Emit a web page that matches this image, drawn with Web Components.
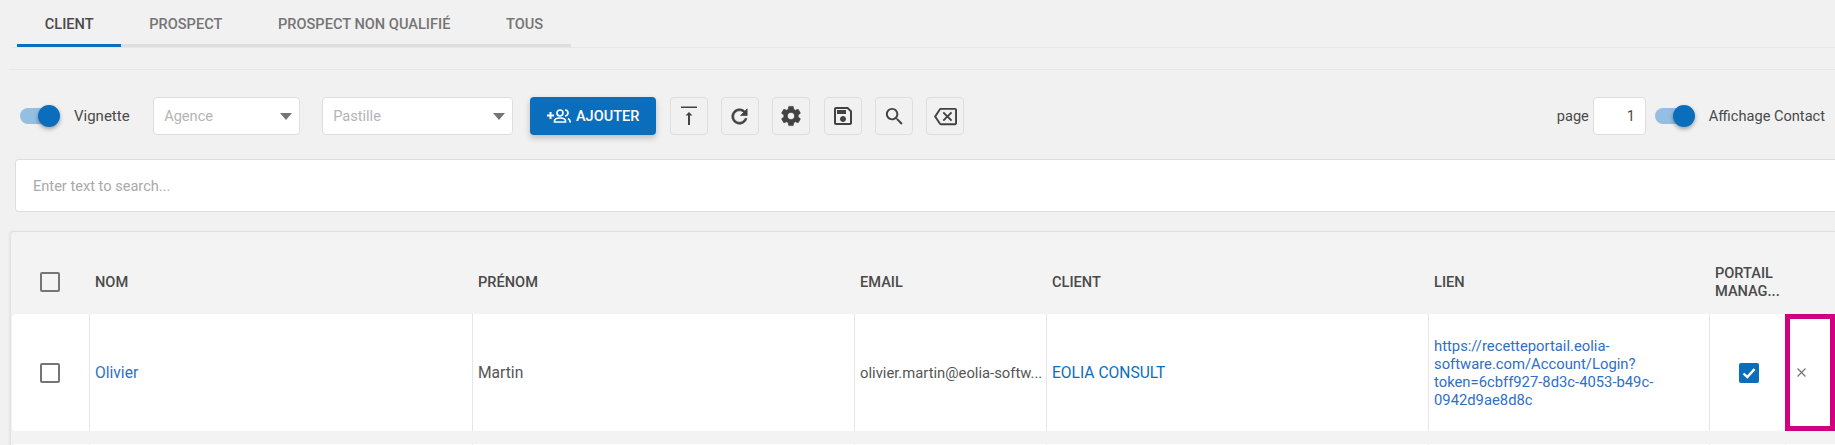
<!DOCTYPE html>
<html lang="fr">
<head>
<meta charset="utf-8">
<title>Contacts</title>
<style>
	html, body { margin: 0; height: 100%; overflow: hidden; }
	body { background: #f1f1f1; color: #4a4a4a; font: 14.6px Roboto, "Liberation Sans", sans-serif; }
</style>
</head>
<body>
<contact-page></contact-page>
<script>
const ICONS = {
	top: '<path d="M4 2.500h16v1.600H4zM12 8l-3.500 3.500h2.500V21h2v-9.500h2.500z"/>',
	refresh: '<path stroke="#424242" stroke-width=".7" d="M17.65 6.35C16.2 4.9 14.21 4 12 4c-4.42 0-7.99 3.58-7.99 8s3.57 8 7.99 8c3.73 0 6.84-2.55 7.73-6h-2.08c-.82 2.33-3.04 4-5.65 4-3.31 0-6-2.69-6-6s2.69-6 6-6c1.66 0 3.14.69 4.22 1.78L13 11h7V4l-2.35 2.35z"/>',
	settings: '<path stroke="#424242" stroke-width=".6" d="M19.14 12.94c.04-.3.06-.61.06-.94 0-.32-.02-.64-.07-.94l2.03-1.58c.18-.14.23-.41.12-.61l-1.92-3.32c-.12-.22-.37-.29-.59-.22l-2.39.96c-.5-.38-1.03-.7-1.62-.94l-.36-2.54c-.04-.24-.24-.41-.48-.41h-3.84c-.24 0-.43.17-.47.41l-.36 2.54c-.59.24-1.13.57-1.62.94l-2.39-.96c-.22-.08-.47 0-.59.22L2.74 8.87c-.12.21-.08.47.12.61l2.03 1.58c-.05.3-.09.63-.09.94s.02.64.07.94l-2.03 1.58c-.18.14-.23.41-.12.61l1.92 3.32c.12.22.37.29.59.22l2.39-.96c.5.38 1.03.7 1.62.94l.36 2.54c.05.24.24.41.48.41h3.84c.24 0 .44-.17.47-.41l.36-2.54c.59-.24 1.13-.56 1.62-.94l2.39.96c.22.08.47 0 .59-.22l1.92-3.32c.12-.22.07-.47-.12-.61l-2.01-1.58zM12 15.600c-1.98 0-3.6-1.62-3.6-3.6s1.62-3.6 3.6-3.6 3.6 1.62 3.6 3.6-1.62 3.6-3.6 3.6z"/>',
	save: '<path d="M17 3H5c-1.11 0-2 .9-2 2v14c0 1.1.89 2 2 2h14c1.1 0 2-.9 2-2V7l-4-4zm2 16H5V5h11.17L19 7.83V19zm-7-7c-1.66 0-3 1.34-3 3s1.34 3 3 3 3-1.34 3-3-1.34-3-3-3zM6 6h9v4H6z"/>',
	search: '<path d="M15.5 14h-.79l-.28-.27C15.41 12.59 16 11.11 16 9.5 16 5.91 13.09 3 9.5 3S3 5.91 3 9.5 5.91 16 9.5 16c1.61 0 3.09-.59 4.23-1.57l.27.28v.79l5 4.99L20.49 19l-4.99-5zm-6 0C7.01 14 5 11.99 5 9.5S7.01 5 9.5 5 14 7.01 14 9.5 11.99 14 9.5 14z"/>',
	clear: '<path d="M22 3H7c-.69 0-1.23.35-1.59.88L0 12l5.41 8.11c.36.53.9.89 1.59.89h15c1.1 0 2-.9 2-2V5c0-1.1-.9-2-2-2zm0 16H7.07L2.4 12l4.66-7H22v14zm-11.59-2L14 13.41 17.59 17 19 15.59 15.41 12 19 8.41 17.59 7 14 10.59 10.41 7 9 8.41 12.59 12 9 15.59z"/>'
};

class BaseElement extends HTMLElement {
	constructor() {
		super();
		this.attachShadow({ mode: "open" });
	}
	getStyles() {
		return "";
	}
	getMarkup() {
		return "<slot></slot>";
	}
	connectedCallback() {
		const template = document.createElement("template");
		template.innerHTML = `<style>${this.getStyles()}</style>${this.getMarkup()}`;
		this.shadowRoot.appendChild(template.content.cloneNode(true));
	}
}

class UiTab extends BaseElement {
	getStyles() {
		return `
			:host { display: block; height: 44px; line-height: 48px; padding: 0 27.800px; border-bottom: 3px solid #dedede;
				font-size: 14.600px; font-weight: 500; color: #757575; white-space: nowrap; }
			:host([active]) { border-bottom-color: #0a6ebd; color: #4a4a4a; }
		`;
	}
}

class UiTabs extends BaseElement {
	getStyles() {
		return `
			:host { display: block; height: 70px; box-sizing: border-box; padding-left: 12px; border-bottom: 1px solid #e7e7e7; margin-left: 9px; }
			.bar { display: flex; padding-left: 5px; border-bottom: 1px solid #e7e7e7; height: 47px; margin-left: -9px; }
		`;
	}
	getMarkup() {
		return `<div class="bar"><slot></slot></div>`;
	}
}

class UiToggle extends BaseElement {
	getStyles() {
		return `
			:host { display: inline-flex; align-items: center; gap: 14px; white-space: nowrap; }
			.switch { display: block; width: 40px; height: 24px; position: relative; }
			.track { display: block; width: 36px; height: 16px; margin-top: 4px; border-radius: 8px; background: #95bfe2; }
			.knob { position: absolute; right: 0; top: 1px; width: 22px; height: 22px; border-radius: 50%; background: #0a6ebd;
				box-shadow: 0 2px 4px rgba(0,0,0,.35); }
		`;
	}
	getMarkup() {
		return `<span class="switch"><span class="track"></span><span class="knob"></span></span><slot></slot>`;
	}
}

class UiSelect extends BaseElement {
	getStyles() {
		return `
			:host { display: flex; align-items: center; justify-content: space-between; box-sizing: border-box; height: 38px;
				padding: 0 7px 0 10px; background: #fff; border: 1px solid #dedede; border-radius: 4px; color: #b5b5b5; }
			i { width: 0; height: 0; border: 6.500px solid transparent; border-top: 7px solid #757575; border-bottom: 0; }
		`;
	}
	getMarkup() {
		return `<slot></slot><i></i>`;
	}
}

class UiButton extends BaseElement {
	getStyles() {
		return `
			:host { display: flex; align-items: center; justify-content: center; gap: 5px; box-sizing: border-box; width: 126px; height: 38px;
				background: #0a6ebd; color: #fff; border-radius: 4px; font-weight: 500; font-size: 14.500px; box-shadow: 0 3px 6px rgba(0,0,0,.22); }
			svg { width: 24px; height: 14px; }
		`;
	}
	getMarkup() {
		return `<svg viewBox="0 0 24 14" fill="none" stroke="#fff" stroke-width="1.700">
				<path d="M0 6.500h7M3.500 3v7" stroke-width="2"/>
				<circle cx="13" cy="4" r="3"/>
				<path d="M7.500 13v-1c0-2 3-3 5.500-3s5.500 1 5.500 3v1z"/>
				<path d="M18 1a3 3 0 0 1 0 6M21 9.500c1.500.7 2.200 1.700 2.200 4"/>
			</svg><slot></slot>`;
	}
}

class IconButton extends BaseElement {
	getStyles() {
		return `
			:host { display: flex; align-items: center; justify-content: center; box-sizing: border-box; width: 38px; height: 38px;
				border: 1px solid #dedede; border-radius: 4px; }
			svg { width: 24px; height: 24px; fill: #424242; }
			:host([icon="search"]) svg, :host([icon="refresh"]) svg, :host([icon="clear"]) svg { width: 23px; height: 23px; }
		`;
	}
	getMarkup() {
		return `<svg viewBox="0 0 24 24">${ICONS[this.getAttribute("icon")]}</svg>`;
	}
}

class UiToolbar extends BaseElement {
	getStyles() {
		return `
			:host { display: flex; align-items: center; height: 38px; margin-top: 27px; padding: 0 10px 0 20px; }
			.left { display: flex; align-items: center; flex: 1; }
			.right { display: flex; align-items: center; }
		`;
	}
	getMarkup() {
		return `<div class="left"><slot></slot></div><div class="right"><slot name="right"></slot></div>`;
	}
}

class PageInput extends BaseElement {
	getStyles() {
		return `
			:host { display: flex; align-items: center; }
			.box { box-sizing: border-box; width: 53px; height: 38px; line-height: 36px; margin-left: 4px; padding-right: 10px; text-align: right;
				background: #fff; border: 1px solid #dedede; border-radius: 4px; }
		`;
	}
	getMarkup() {
		return `<span>page</span><span class="box"><slot></slot></span>`;
	}
}

class SearchBox extends BaseElement {
	getStyles() {
		return `
			:host { display: block; box-sizing: border-box; height: 53px; line-height: 53px; margin: 24px 0 0 15px; padding-left: 17px;
				background: #fff; border: 1px solid #dedede; border-right: 0; border-radius: 4px 0 0 4px; color: #a9a9a9; }
		`;
	}
}

class UiCheck extends BaseElement {
	getStyles() {
		return `
			:host { display: block; box-sizing: border-box; width: 20px; height: 20px; border: 2px solid #757575; border-radius: 2px; }
			:host([checked]) { border: 0; background: #0a6ebd; }
			svg { display: block; width: 20px; height: 20px; fill: none; stroke: #fff; stroke-width: 2.400; }
		`;
	}
	getMarkup() {
		return this.hasAttribute("checked") ? `<svg viewBox="0 0 20 20"><path d="M4.500 10.500l3.800 3.600 7.200-8"/></svg>` : "";
	}
}

const COLUMNS = "77px 383px 382px 192px 382px 281px 76px 1fr";

class DataHead extends BaseElement {
	getStyles() {
		return `
			:host { display: grid; grid-template-columns: ${COLUMNS}; height: 64px; padding-top: 18px; align-items: center; font-weight: 500; line-height: 18px; }
			::slotted(*) { padding: 0 6px; }
			::slotted(:first-child) { padding: 0 0 0 28px; }
		`;
	}
}

class DataRow extends BaseElement {
	getStyles() {
		return `
			:host { display: grid; grid-template-columns: ${COLUMNS}; height: 117px; background: #fff; border-radius: 4px 0 0 4px; line-height: 18px; color: #555; }
			::slotted(*) { display: flex; align-items: center; box-sizing: border-box; padding: 0 5px; border-left: 1px solid #e6e6e6; min-width: 0; }
			::slotted(:first-child) { border-left: 0; padding-left: 28px; }
		`;
	}
}

class DataTable extends BaseElement {
	getStyles() {
		return `
			:host { display: block; height: 300px; margin: 19px 0 0 10px; padding-left: 1px; background: #f3f3f3;
				border-top: 1px solid #e0e0e0; border-left: 1px solid #e4e4e4; border-radius: 4px 0 0 0; box-shadow: -1px 0 2px rgba(0,0,0,.05); }
			::slotted(.stub) { margin-top: 13px; }
		`;
	}
}

class ContactPage extends BaseElement {
	getStyles() {
		return `
			:host { display: block; width: 1835px; height: 445px; overflow: hidden; }
			a { color: #0a6ebd; text-decoration: none; }
			.big { font-size: 15.600px; }
			.small { font-size: 14.800px; white-space: nowrap; }
			.tool { margin-left: 13.400px; }
			.lien { width: 240px; font-size: 14.800px; color: #2f6fc4; }
			.center { justify-content: center; padding-left: 8px !important; }
			.x { border: 5px solid #d0007f !important; padding: 0 0 0 7px !important; }
			.x svg { width: 9px; height: 9px; stroke: #757575; stroke-width: 1.200; fill: none; }
			.link { color: #2f6fc4; }
		`;
	}
	getMarkup() {
		return `
			<ui-tabs>
				<ui-tab active>CLIENT</ui-tab>
				<ui-tab>PROSPECT</ui-tab>
				<ui-tab>PROSPECT NON QUALIFIÉ</ui-tab>
				<ui-tab>TOUS</ui-tab>
			</ui-tabs>
			<ui-toolbar>
				<ui-toggle style="font-size:15px">Vignette</ui-toggle>
				<ui-select style="width:147px;margin-left:23.500px">Agence</ui-select>
				<ui-select style="width:191px;margin-left:22px">Pastille</ui-select>
				<ui-button style="margin-left:17px">AJOUTER</ui-button>
				<icon-button icon="top" class="tool"></icon-button>
				<icon-button icon="refresh" class="tool"></icon-button>
				<icon-button icon="settings" class="tool"></icon-button>
				<icon-button icon="save" class="tool"></icon-button>
				<icon-button icon="search" class="tool"></icon-button>
				<icon-button icon="clear" class="tool"></icon-button>
				<page-input slot="right">1</page-input>
				<ui-toggle slot="right" style="margin-left:9px">Affichage Contact</ui-toggle>
			</ui-toolbar>
			<search-box>Enter text to search...</search-box>
			<data-table>
				<data-head>
					<div><ui-check></ui-check></div>
					<div>NOM</div>
					<div>PRÉNOM</div>
					<div>EMAIL</div>
					<div>CLIENT</div>
					<div>LIEN</div>
					<div>PORTAIL<br>MANAG...</div>
					<div></div>
				</data-head>
				<data-row>
					<div><ui-check></ui-check></div>
					<div class="big"><span class="link">Olivier</span></div>
					<div class="big">Martin</div>
					<div class="small">olivier.martin@eolia-softw...</div>
					<div class="big"><a href="#">EOLIA CONSULT</a></div>
					<div><span class="lien">https://recetteportail.eolia-software.com/Account/Login?token=6cbff927-8d3c-4053-b49c-0942d9ae8d8c</span></div>
					<div class="center"><ui-check checked></ui-check></div>
					<div class="x"><svg viewBox="0 0 9 9"><path d="M.5.5l8 8M8.500.5l-8 8"/></svg></div>
				</data-row>
				<data-row class="stub">
					<div></div><div></div><div></div><div></div><div></div><div></div><div></div><div></div>
				</data-row>
			</data-table>
		`;
	}
}

customElements.define("ui-tab", UiTab);
customElements.define("ui-tabs", UiTabs);
customElements.define("ui-toggle", UiToggle);
customElements.define("ui-select", UiSelect);
customElements.define("ui-button", UiButton);
customElements.define("icon-button", IconButton);
customElements.define("ui-toolbar", UiToolbar);
customElements.define("page-input", PageInput);
customElements.define("search-box", SearchBox);
customElements.define("ui-check", UiCheck);
customElements.define("data-head", DataHead);
customElements.define("data-row", DataRow);
customElements.define("data-table", DataTable);
customElements.define("contact-page", ContactPage);
</script>
</body>
</html>
